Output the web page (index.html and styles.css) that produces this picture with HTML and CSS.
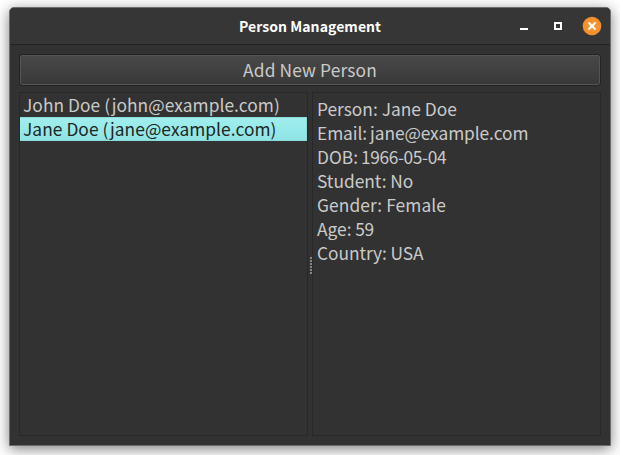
FILE: index.html
```html
<!DOCTYPE html>
<html lang="en">
<head>
<meta charset="utf-8">
<title>Person Management</title>
<link rel="stylesheet" href="styles.css">
</head>
<body>
<div class="window">
  <header class="titlebar">
    <h1>Person Management</h1>
    <div class="controls">
      <svg width="92" height="20" viewBox="0 0 92 20">
        <rect x="10" y="12" width="8" height="2" fill="#fff"/>
        <rect x="45" y="7" width="6" height="6" fill="none" stroke="#fff" stroke-width="2"/>
        <circle cx="82" cy="10" r="9.3" fill="#f6902c"/>
        <path d="M78.5 6.500L85.500 13.500M85.500 6.500L78.500 13.500" stroke="#fff" stroke-width="2.2"/>
      </svg>
    </div>
  </header>
  <main class="content">
    <button class="add">Add New Person</button>
    <div class="split">
      <ul class="list">
        <li>John Doe (john@example.com)</li>
        <li class="selected">Jane Doe (jane@example.com)</li>
      </ul>
      <div class="grip">
        <i></i><i></i><i></i><i></i><i></i><i></i>
      </div>
      <div class="details">
        <p>Person: Jane Doe</p>
        <p class="email">Email: jane@example.com</p>
        <p class="dob">DOB: <span class="digits">1966-05-04</span></p>
        <p>Student: No</p>
        <p class="gender">Gender: Female</p>
        <p>Age: <span class="digits">59</span></p>
        <p class="country">Country: USA</p>
      </div>
    </div>
  </main>
</div>
</body>
</html>
```
FILE: styles.css
```css
* { box-sizing: border-box; margin: 0; padding: 0; }
body {
  width: 620px;
  height: 455px;
  padding: 7px 9px;
  overflow: hidden;
  background: #fff;
  font: 17.33px/24px "Noto Sans CJK SC", "Noto Sans", sans-serif;
  color: #cacaca;
}
.window {
  display: flex;
  flex-direction: column;
  width: 602px;
  height: 439px;
  border: 1px solid #6c6c6c;
  border-radius: 5px 5px 0 0;
  background: #323232;
  box-shadow: 0 3px 14px rgba(0, 0, 0, 0.5);
  overflow: hidden;
}
.titlebar {
  display: grid;
  grid-template-columns: 92px 1fr 92px;
  align-items: center;
  height: 37px;
  padding: 0 8px;
  background: #363636;
  border-bottom: 1px solid #222;
}
.titlebar h1 {
  grid-column: 2;
  font-size: 14px;
  letter-spacing: 0.06px;
  line-height: 20px;
  font-weight: 700;
  color: #fff;
  text-align: center;
}
.controls svg { display: block; }
.content {
  flex: 1;
  display: flex;
  flex-direction: column;
  gap: 6px;
  padding: 9px;
}
.add {
  height: 30px;
  margin: 1px;
  padding-bottom: 1px;
  border: 1px solid #555;
  border-radius: 2px;
  outline: 1px solid #232323;
  background: linear-gradient(#484848, #393939);
  font: inherit;
  letter-spacing: 0.14px;
  color: inherit;
}
.split { flex: 1; display: flex; }
.list, .details { border: 1px solid #282828; }
.list { width: 289px; list-style: none; letter-spacing: 0.06px; }
.list li { height: 24px; padding-left: 3px; line-height: 23px; }
.list .selected {
  background: linear-gradient(#a0eeee, #90e4e4);
  border: 1px solid #88dcdc;
  border-left: 0;
  line-height: 21px;
  color: #1c2626;
}
.grip {
  display: flex;
  flex-direction: column;
  justify-content: center;
  gap: 1px;
  width: 4px;
  padding: 2px 0 0 2px;
}
.grip i { width: 2px; height: 2px; background: #888; }
.details { flex: 1; padding: 4px; }
.details .email { letter-spacing: -0.08px; word-spacing: -0.8px; }
.details .dob { word-spacing: -1px; }
.details .gender { letter-spacing: 0.1px; }
.details .country { letter-spacing: -0.06px; }
.digits { letter-spacing: -0.36px; }
```
